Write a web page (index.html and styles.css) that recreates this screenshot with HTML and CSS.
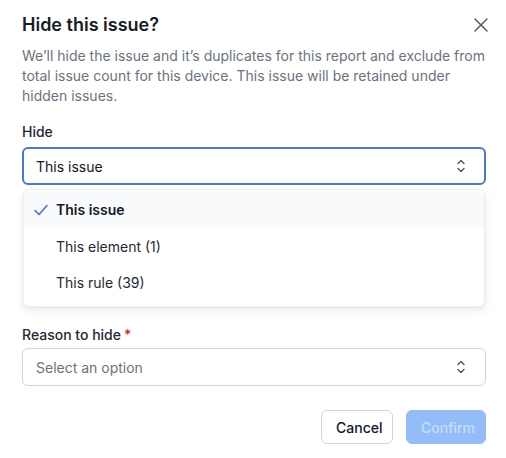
FILE: index.html
```html
<!DOCTYPE html>
<html lang="en">
<head>
<meta charset="utf-8">
<title>Hide this issue?</title>
<link rel="stylesheet" href="styles.css">
</head>
<body>
<div class="dialog">
  <div class="header">
    <h2 class="title">Hide this issue?</h2>
    <button class="close" aria-label="Close">
      <svg width="16" height="16" viewBox="0 0 16 16" fill="none" stroke="#555b66" stroke-width="1.5" stroke-linecap="round"><path d="M2 2L14 14M14 2L2 14"/></svg>
    </button>
  </div>
  <p class="desc">We’ll hide the issue and it’s duplicates for this report and exclude from total issue count for this device. This issue will be retained under hidden issues.</p>

  <div class="field">
    <label class="label">Hide</label>
    <div class="select active">
      <span class="value">This issue</span>
      <svg class="chev" width="10" height="16" viewBox="0 0 10 16" fill="none" stroke="#4b5563" stroke-width="1.4" stroke-linecap="round" stroke-linejoin="round"><path d="M2 5.5L5 2.5L8 5.5M2 10.5L5 13.5L8 10.5"/></svg>
    </div>
    <ul class="menu">
      <li class="item selected">
        <svg class="check" width="16" height="16" viewBox="0 0 16 16" fill="none" stroke="#4a6fd1" stroke-width="1.6" stroke-linecap="round" stroke-linejoin="round"><path d="M2 8.5L6 12.5L14 3.5"/></svg>
        <span>This issue</span>
      </li>
      <li class="item"><span>This element (1)</span></li>
      <li class="item"><span>This rule (39)</span></li>
    </ul>
  </div>

  <div class="field reason">
    <label class="label">Reason to hide<span class="req">*</span></label>
    <div class="select">
      <span class="placeholder">Select an option</span>
      <svg class="chev" width="10" height="16" viewBox="0 0 10 16" fill="none" stroke="#4b5563" stroke-width="1.4" stroke-linecap="round" stroke-linejoin="round"><path d="M2 5.5L5 2.5L8 5.5M2 10.5L5 13.5L8 10.5"/></svg>
    </div>
  </div>

  <div class="actions">
    <button class="btn cancel">Cancel</button>
    <button class="btn confirm" disabled>Confirm</button>
  </div>
</div>
</body>
</html>
```

FILE: styles.css
```css
* { box-sizing: border-box; }
html, body { margin: 0; padding: 0; background: #fff; }
body { font-family: Inter, "Noto Sans", sans-serif; color: #111827; }

.dialog { width: 506px; padding: 12px 20px 0 22px; }

.header { display: flex; align-items: center; justify-content: space-between; height: 26px; }
.title { margin: 0; font-size: 18px; line-height: 26px; font-weight: 600; color: #161b26; }
.close { border: 0; background: none; padding: 0; width: 16px; height: 16px; margin-right: -3px; display: flex; }

.desc { margin: 8px 0 0; font-size: 14px; line-height: 20px; color: #6b7280; }

.field { margin-top: 16px; display: flex; flex-direction: column; }
.label { font-size: 14px; line-height: 20px; font-weight: 500; color: #1f2937; margin-bottom: 5px; }
.req { color: #dc2626; margin-left: 3px; }

.select { height: 38px; border: 1px solid #d1d5db; border-radius: 6px; display: flex; align-items: center; justify-content: space-between; padding: 0 19px 0 13px; font-size: 14px; }
.select.active { border: 2px solid #4a78d6; padding: 0 18px 0 12px; }
.value { color: #111827; }
.placeholder { color: #6b7280; }

.menu { list-style: none; margin: 4px 1px 0; padding: 1px 0 6px; border: 1px solid #eceef1; border-radius: 6px; box-shadow: 0 4px 10px rgba(17, 24, 39, 0.08), 0 1px 3px rgba(17, 24, 39, 0.05); background: #fff; }
.item { height: 36px; display: flex; align-items: center; padding-left: 32px; font-size: 14px; color: #1f2937; }
.item.selected { background: #f9fafb; font-weight: 600; color: #111827; padding-left: 9px; height: 37px; }
.check { margin-right: 7px; }

.reason { margin-top: 18px; }
.reason .label { margin-bottom: 3px; }

.actions { display: flex; justify-content: flex-end; gap: 13px; margin-top: 24px; }
.btn { height: 34px; border-radius: 6px; font-family: inherit; font-size: 14px; font-weight: 500; padding: 0 14px; }
.cancel { background: #fff; border: 1px solid #d1d5db; color: #111827; width: 72px; }
.confirm { background: #93bdf8; border: 1px solid #93bdf8; color: #c6ddfc; width: 80px; }
```
